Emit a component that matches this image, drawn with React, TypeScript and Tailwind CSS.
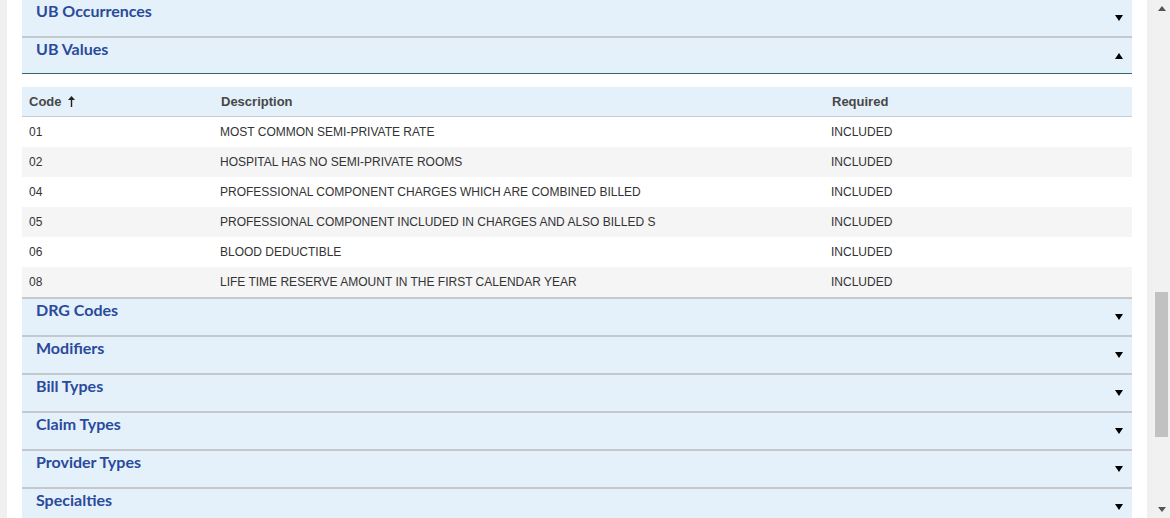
import React from "react";

const titleFont = { fontFamily: "Lato, 'Open Sans', sans-serif" };

function Caret({ up }: { up?: boolean }) {
  return (
    <svg width="8" height="6" viewBox="0 0 8 6" className="block">
      {up ? <polygon points="0,6 8,6 4,0" fill="#000" /> : <polygon points="0,0 8,0 4,6" fill="#000" />}
    </svg>
  );
}

function Header({ title, up, first }: { title: string; up?: boolean; first?: boolean }) {
  return (
    <div className={first ? "" : "border-t-2 border-[#c5c9cd]"}>
      <div className="h-[36px] bg-[#e4f1fb] flex justify-between pl-[14px] pr-[9px]">
        <div className="text-[16px] font-bold text-[#2a4a9a] leading-[22px]" style={titleFont}>
          {title}
        </div>
        <div className="pt-[15px]">
          <Caret up={up} />
        </div>
      </div>
    </div>
  );
}

const rows = [
  ["01", "MOST COMMON SEMI-PRIVATE RATE"],
  ["02", "HOSPITAL HAS NO SEMI-PRIVATE ROOMS"],
  ["04", "PROFESSIONAL COMPONENT CHARGES WHICH ARE COMBINED BILLED"],
  ["05", "PROFESSIONAL COMPONENT INCLUDED IN CHARGES AND ALSO BILLED S"],
  ["06", "BLOOD DEDUCTIBLE"],
  ["08", "LIFE TIME RESERVE AMOUNT IN THE FIRST CALENDAR YEAR"],
];

export default function App() {
  const arial = { fontFamily: "'Liberation Sans', Arial, sans-serif" };
  return (
    <div className="flex h-[518px] w-[1170px] overflow-hidden bg-[#f0f0f0]" style={arial}>
      <div className="w-[7px] shrink-0 bg-[#f0f0f0]" />
      <div className="w-[1140px] shrink-0 bg-white px-[15px]">
        <Header title="UB Occurrences" first />
        <div className="border-t-2 border-[#c5c9cd]">
          <div className="h-[36px] bg-[#e4f1fb] flex justify-between pl-[14px] pr-[9px] border-b border-[#2f6b6b]">
            <div className="text-[16px] font-bold text-[#2a4a9a] leading-[22px]" style={titleFont}>
              UB Values
            </div>
            <div className="pt-[15px]">
              <Caret up />
            </div>
          </div>
          <div className="pt-[13px]">
            <div className="grid grid-cols-[191px_611px_1fr] h-[30px] items-center bg-[#e4f1fb] border-b border-[#c8ccd0] text-[13px] font-bold text-[#474747]">
              <div className="pl-[7px] flex items-center gap-[6px]">
                Code
                <svg width="7" height="11" viewBox="0 0 7 11" className="block">
                  <polygon points="3.5,0 7,4 0,4" fill="#222" />
                  <rect x="2.8" y="3" width="1.4" height="8" fill="#222" />
                </svg>
              </div>
              <div className="pl-[8px]">Description</div>
              <div className="pl-[8px]">Required</div>
            </div>
            {rows.map(([code, desc], i) => (
              <div
                key={code}
                className={`grid grid-cols-[191px_611px_1fr] h-[30px] items-center text-[12px] text-[#333] ${i % 2 === 1 ? "bg-[#f5f5f5]" : "bg-white"}`}
              >
                <div className="pl-[7px]">{code}</div>
                <div className="pl-[7px]">{desc}</div>
                <div className="pl-[7px]">INCLUDED</div>
              </div>
            ))}
          </div>
        </div>
        <Header title="DRG Codes" />
        <Header title="Modifiers" />
        <Header title="Bill Types" />
        <Header title="Claim Types" />
        <Header title="Provider Types" />
        <Header title="Specialties" />
      </div>
      <div className="w-[6px] shrink-0 bg-[#f0f0f0]" />
      <div className="w-[17px] shrink-0 bg-[#f1f1f1] flex flex-col items-center">
        <div className="h-[17px] flex items-center justify-center">
          <svg width="8" height="5" viewBox="0 0 8 5"><polygon points="0,5 8,5 4,0" fill="#555" /></svg>
        </div>
        <div className="h-[275px]" />
        <div className="w-[13px] h-[145px] bg-[#c1c1c1]" />
        <div className="flex-1" />
        <div className="h-[17px] flex items-center justify-center">
          <svg width="8" height="5" viewBox="0 0 8 5"><polygon points="0,0 8,0 4,5" fill="#555" /></svg>
        </div>
      </div>
    </div>
  );
}
